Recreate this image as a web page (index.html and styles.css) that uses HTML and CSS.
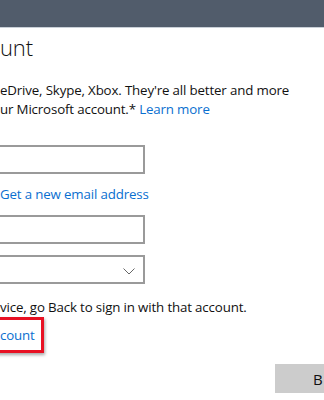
FILE: index.html
```html
<!DOCTYPE html>
<html lang="en">
<head>
  <meta charset="UTF-8">
  <meta name="viewport" content="width=device-width, initial-scale=1.0">
  <title>Create account</title>
  <link rel="stylesheet" href="styles.css">
</head>
<body>
  <header class="topbar"></header>

  <main class="page">
    <h1 class="title">unt</h1>

    <p class="intro">
      eDrive, Skype, Xbox. They're all better and more<br>
      ur Microsoft account.* <a href="#" class="link">Learn more</a>
    </p>

    <input type="text" class="field">
    <a href="#" class="link new-email">Get a new email address</a>
    <input type="password" class="field">

    <div class="field select">
      <svg class="chevron" width="12" height="7" viewBox="0 0 12 7">
        <path d="M0.5 0.5 L6 6 L11.5 0.5" fill="none" stroke="#666" stroke-width="1"/>
      </svg>
    </div>

    <p class="note">vice, go Back to sign in with that account.</p>

    <div class="highlight">
      <a href="#" class="link">count</a>
    </div>

    <div class="actions">
      <button class="btn">B</button>
    </div>
  </main>
</body>
</html>
```

FILE: styles.css
```css
* {
  box-sizing: border-box;
  margin: 0;
  padding: 0;
}

body {
  width: 324px;
  height: 400px;
  overflow: hidden;
  background: #fff;
  color: #111;
  font-family: "Open Sans", "Noto Sans", sans-serif;
  font-size: 13.3px;
  letter-spacing: -0.15px;
}

.topbar {
  height: 28px;
  background: #515c6b;
  border-bottom: 1px solid #c9d0d8;
}

.page {
  display: flex;
  flex-direction: column;
  align-items: flex-start;
}

.title {
  margin-top: 4px;
  font-size: 22px;
  font-weight: 300;
  line-height: 30px;
  color: #111;
}

.intro {
  margin-top: 19px;
  line-height: 19px;
}

.link {
  color: #0a6fd0;
  text-decoration: none;
}

.field {
  display: block;
  width: 155px;
  height: 29px;
  margin-left: -10px;
  border: 2px solid #9a9a9a;
  background: #fff;
}

.intro + .field {
  margin-top: 26px;
}

.new-email {
  margin: 11px 0 11px;
  line-height: 19px;
}

.select {
  position: relative;
  margin-top: 11px;
}

.chevron {
  position: absolute;
  right: 8px;
  top: 11px;
}

.note {
  margin-top: 14px;
  line-height: 19px;
}

.highlight {
  margin-left: -10px;
  width: 54px;
  height: 36px;
  padding: 6px 0 0 7px;
  border: 3px solid #e81123;
  box-shadow: 1px 2px 3px rgba(0, 0, 0, 0.35);
  line-height: 19px;
}

.actions {
  align-self: stretch;
  display: flex;
  justify-content: flex-end;
  margin-top: 11px;
}

.btn {
  width: 60px;
  height: 29px;
  margin-right: -11px;
  border: none;
  background: #cccccc;
  color: #111;
  font-family: inherit;
  font-size: 15px;
  text-align: left;
  padding-left: 38px;
}
```
